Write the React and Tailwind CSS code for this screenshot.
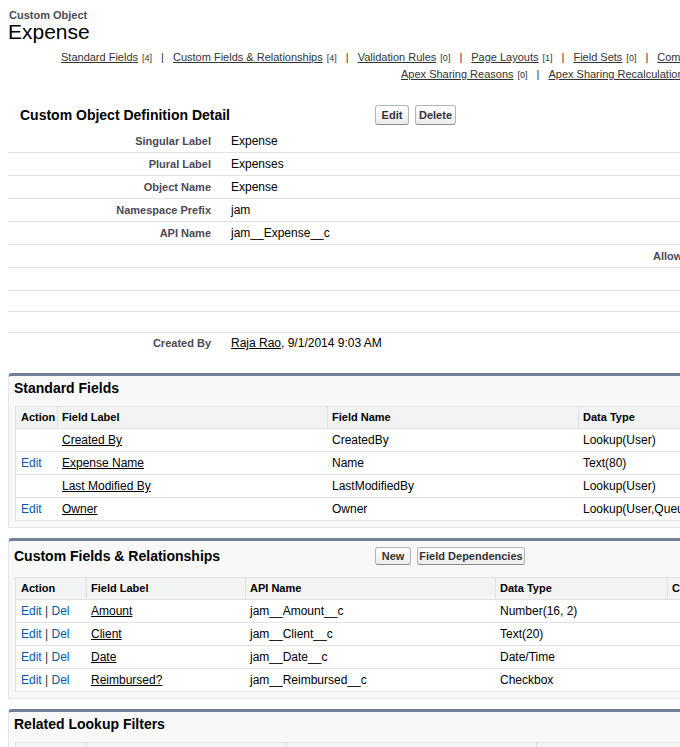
const navRow1 = [
  ['Standard Fields', 4],
  ['Custom Fields & Relationships', 4],
  ['Validation Rules', 0],
  ['Page Layouts', 1],
  ['Field Sets', 0],
  ['Compact Layouts', 1],
  ['Search Layouts', 6],
];

const navRow2 = [
  ['Apex Sharing Reasons', 0],
  ['Apex Sharing Recalculation', 0],
];

const detailRows = [
  { label: 'Singular Label', value: 'Expense' },
  { label: 'Plural Label', value: 'Expenses' },
  { label: 'Object Name', value: 'Expense' },
  { label: 'Namespace Prefix', value: 'jam' },
  { label: 'API Name', value: 'jam__Expense__c' },
  { rightLabel: 'Allow Reports' },
  {},
  { short: true },
  { short: true },
];

const standardFields = [
  { edit: false, label: 'Created By', name: 'CreatedBy', type: 'Lookup(User)' },
  { edit: true, label: 'Expense Name', name: 'Name', type: 'Text(80)' },
  { edit: false, label: 'Last Modified By', name: 'LastModifiedBy', type: 'Lookup(User)' },
  { edit: true, label: 'Owner', name: 'Owner', type: 'Lookup(User,Queue)' },
];

const customFields = [
  { label: 'Amount', api: 'jam__Amount__c', type: 'Number(16, 2)' },
  { label: 'Client', api: 'jam__Client__c', type: 'Text(20)' },
  { label: 'Date', api: 'jam__Date__c', type: 'Date/Time' },
  { label: 'Reimbursed?', api: 'jam__Reimbursed__c', type: 'Checkbox' },
];

function NavRow({ items, className }) {
  return (
    <div className={`flex h-[17px] items-center whitespace-nowrap text-[11px] leading-[17px] text-[#333] ${className}`}>
      {items.map(([label, count], i) => (
        <span key={label} className="flex items-baseline">
          {i > 0 && <span className="mx-[9px]">|</span>}
          <a className="underline">{label}</a>
          <span className="ml-[4px] text-[9px] leading-none">[{count}]</span>
        </span>
      ))}
    </div>
  );
}

function Btn({ children, className = '' }) {
  return (
    <button
      type="button"
      className={`flex items-center justify-center rounded-[3px] border border-[#b5b5b5] border-b-[#8a8a8a] bg-linear-to-b from-white to-[#ececec] text-[11px] font-bold text-[#333] ${className}`}
    >
      {children}
    </button>
  );
}

function DetailRow({ label, value, rightLabel, short }) {
  return (
    <div className={`flex items-center border-b border-[#e3e3e3] ${short ? 'h-[21px]' : 'h-[23px]'}`}>
      <div className="w-[213px] shrink-0 pr-[10px] text-right text-[11px] font-bold text-[#4a4a56]">{label}</div>
      <div className="w-[422px] shrink-0 pl-[10px] text-[12px] text-black">{value}</div>
      <div className="shrink-0 pl-[10px] whitespace-nowrap text-[11px] font-bold text-[#4a4a56]">{rightLabel}</div>
    </div>
  );
}

function Panel({ title, buttons, children, className = '' }) {
  return (
    <div className={`ml-[8px] w-[1000px] rounded-t-[4px] border border-t-[3px] border-[#e6e6e6] border-t-[#747e96] bg-[#f8f8f8] px-[6px] pb-[6px] ${className}`}>
      {buttons ? (
        <div className="-mx-[6px] flex items-center pt-[6px] pb-[12px]">
          <h2 className="w-[366px] shrink-0 pl-[5px] text-[14px] font-bold leading-[18px] text-black">{title}</h2>
          <div className="flex gap-[6px]">{buttons}</div>
        </div>
      ) : (
        <h2 className="-ml-[1px] pt-[3px] pb-[9px] text-[14px] font-bold leading-[18px] text-black">{title}</h2>
      )}
      {children}
    </div>
  );
}

function HeaderRow({ cols, widths }) {
  return (
    <div className="flex h-[22px] items-center border-b border-[#e0e3e5] bg-[#f2f3f3] text-[11px] font-bold text-black">
      {cols.map((c, i) => (
        <div
          key={c}
          className={`flex h-full shrink-0 items-center ${i > 0 ? 'border-l border-[#e0e3e5] pl-[4px]' : 'pl-[5px]'}`}
          style={{ width: widths[i] }}
        >
          {c}
        </div>
      ))}
    </div>
  );
}

export default function App() {
  const stdWidths = [41, 270, 251, 220, 150];
  const cusWidths = [70, 159, 250, 172, 150];

  return (
    <div className="h-[747px] w-[680px] overflow-hidden bg-white font-['Liberation_Sans',Arial,sans-serif] text-black">
      <div className="w-[1100px]">
        <div className="pt-[9px] pl-[9px]">
          <div className="text-[11px] font-bold leading-[13px] text-[#4a4a56]">Custom Object</div>
          <h1 className="-mt-[2px] -ml-[1px] text-[21px] leading-[24px]">Expense</h1>
        </div>

        <NavRow items={navRow1} className="mt-[5px] pl-[61px]" />
        <NavRow items={navRow2} className="pl-[401px]" />

        <div className="mt-[17px] ml-[8px]">
          <div className="flex h-[30px] items-center">
            <h2 className="w-[367px] shrink-0 pl-[12px] text-[14px] font-bold">Custom Object Definition Detail</h2>
            <div className="flex gap-[6px]">
              <Btn className="h-[20px] w-[34px]">Edit</Btn>
              <Btn className="h-[20px] w-[41px]">Delete</Btn>
            </div>
          </div>
          {detailRows.map((r, i) => (
            <DetailRow key={i} {...r} />
          ))}
          <div className="flex h-[20px] items-center">
            <div className="w-[213px] shrink-0 pr-[10px] text-right text-[11px] font-bold text-[#4a4a56]">Created By</div>
            <div className="pl-[10px] text-[12px]">
              <a className="underline">Raja Rao</a>, 9/1/2014 9:03 AM
            </div>
          </div>
        </div>

        <Panel title="Standard Fields" className="mt-[20px]">
          <div className="border-x border-t border-[#e0e3e5] bg-white">
            <HeaderRow cols={['Action', 'Field Label', 'Field Name', 'Data Type', 'Controlling Field']} widths={stdWidths} />
            {standardFields.map((f) => (
              <div key={f.name} className="flex h-[23px] items-center border-b border-[#e3e3e3] text-[12px]">
                <div className="shrink-0 pl-[5px] text-[#015ba7]" style={{ width: stdWidths[0] }}>{f.edit ? 'Edit' : ''}</div>
                <div className="shrink-0 pl-[5px]" style={{ width: stdWidths[1] }}><a className="underline">{f.label}</a></div>
                <div className="shrink-0 pl-[5px]" style={{ width: stdWidths[2] }}>{f.name}</div>
                <div className="shrink-0 pl-[5px] whitespace-nowrap" style={{ width: stdWidths[3] }}>{f.type}</div>
              </div>
            ))}
          </div>
        </Panel>

        <Panel
          title="Custom Fields & Relationships"
          className="mt-[10px]"
          buttons={[
            <Btn key="new" className="h-[18px] w-[36px]">New</Btn>,
            <Btn key="dep" className="h-[18px] w-[108px] whitespace-nowrap">Field Dependencies</Btn>,
          ]}
        >
          <div className="border-x border-t border-[#e0e3e5] bg-white">
            <HeaderRow cols={['Action', 'Field Label', 'API Name', 'Data Type', 'Controlling Field']} widths={cusWidths} />
            {customFields.map((f) => (
              <div key={f.api} className="flex h-[23px] items-center border-b border-[#e3e3e3] text-[12px]">
                <div className="shrink-0 pl-[5px] whitespace-nowrap" style={{ width: cusWidths[0] }}>
                  <a className="text-[#015ba7]">Edit</a> <span className="text-[#333]">|</span> <a className="text-[#015ba7]">Del</a>
                </div>
                <div className="shrink-0 pl-[5px]" style={{ width: cusWidths[1] }}><a className="underline">{f.label}</a></div>
                <div className="shrink-0 pl-[5px]" style={{ width: cusWidths[2] }}>{f.api}</div>
                <div className="shrink-0 pl-[5px]" style={{ width: cusWidths[3] }}>{f.type}</div>
              </div>
            ))}
          </div>
        </Panel>

        <Panel title="Related Lookup Filters" className="mt-[10px]">
          <div className="border-x border-t border-[#e0e3e5] bg-white">
            <HeaderRow cols={['Action', 'Filter Name', 'Field', 'Active']} widths={[70, 200, 250, 172]} />
          </div>
        </Panel>
      </div>
    </div>
  );
}
